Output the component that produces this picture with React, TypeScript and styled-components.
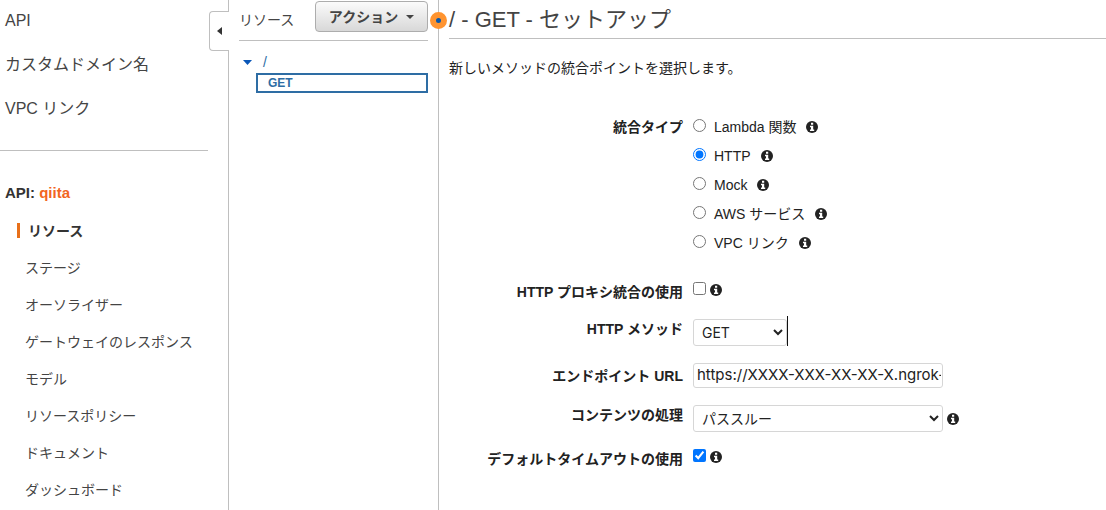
import React, { useState } from "react";
import styled, { createGlobalStyle, css } from "styled-components";

const sans = `"Liberation Sans", "Noto Sans CJK JP", sans-serif`;
const fieldFont = `Inter, "Noto Sans CJK JP", sans-serif`;
const line = "#bfbfbf";

const GlobalStyle = createGlobalStyle`
  * { box-sizing: border-box; }
  body { margin: 0; background: #fff; color: #222; font: 14px/20px ${sans}; }
  button, input, select { font-family: inherit; margin: 0; }
`;

const Page = styled.div`
  display: grid;
  grid-template-columns: 229px 210px minmax(0, 1fr);
  min-height: 100vh;
`;

const Sidebar = styled.aside`
  position: relative;
  padding: 9px 20px 0 0;
  border-right: 1px solid ${line};
  color: #444;
`;

const CollapseButton = styled.button`
  position: absolute;
  top: 11px;
  right: -1px;
  width: 20px;
  height: 40px;
  padding: 0;
  display: flex;
  align-items: center;
  justify-content: center;
  border: 1px solid ${line};
  border-right: 0;
  border-radius: 4px 0 0 4px;
  background: #fff;
`;

const MainNav = styled.nav`
  display: flex;
  flex-direction: column;
  gap: 20px;
  padding: 0 5px 29px;
  border-bottom: 1px solid ${line};
`;

const MainLink = styled.a`
  color: #444;
  font-size: 16px;
  line-height: 24px;
  text-decoration: none;
`;

const ApiName = styled.h2`
  margin: 32px 0 9px 5px;
  font-size: 15px;
  line-height: 20px;
  color: #333;

  span { color: #f26522; }
`;

const ApiNav = styled.nav`
  display: flex;
  flex-direction: column;
`;

const ApiLink = styled.a<{ $active?: boolean }>`
  display: flex;
  align-items: center;
  height: 37px;
  padding-left: 25px;
  color: #444;
  text-decoration: none;
  white-space: nowrap;

  ${({ $active }) => $active && css`
    padding-left: 17px;
    color: #333;
    font-weight: bold;

    &::before {
      content: "";
      width: 3px;
      height: 15px;
      margin-right: 8px;
      background: #e8701a;
    }
  `}
`;

const Resources = styled.section`
  position: relative;
  padding: 0 10px;
  border-right: 1px solid ${line};
`;

const ResourcesHeader = styled.header`
  display: flex;
  align-items: flex-start;
  justify-content: space-between;
  height: 41px;
  padding-top: 1px;
  border-bottom: 1px solid ${line};
`;

const ResourcesTitle = styled.h2`
  margin: 9px 0 0;
  color: #444;
  font-size: 14px;
  font-weight: normal;
  line-height: 20px;
`;

const ActionButton = styled.button`
  display: flex;
  align-items: center;
  justify-content: center;
  gap: 8px;
  width: 113px;
  height: 31px;
  padding: 0 0 2px;
  border: 1px solid #adadad;
  border-radius: 4px;
  background: linear-gradient(#fbfbfb, #d8d8d8);
  color: #444;
  font-size: 14px;
  font-weight: bold;

  svg { margin-top: 2px; }
`;

const SplitHandle = styled.span`
  position: absolute;
  top: 12px;
  right: -9px;
  width: 17px;
  height: 17px;
  border: 6px solid #ff9430;
  border-radius: 50%;
  background: #0a57a8;
`;

const Tree = styled.ul`
  margin: 10px 0 0;
  padding: 0;
  list-style: none;
  color: #2e6da4;
`;

const TreeRoot = styled.li`
  display: flex;
  align-items: center;
  gap: 11px;
  height: 22px;
  padding-left: 4px;
`;

const TreeMethod = styled.li`
  margin-left: 17px;
  height: 20px;
  padding-left: 10px;
  border: 2px solid #2e6da4;
  font-size: 12px;
  font-weight: bold;
  line-height: 16px;
`;

const Setup = styled.main`
  padding-left: 10px;
`;

const SetupTitle = styled.h1`
  margin: 0;
  padding: 6px 0 4px;
  border-bottom: 1px solid ${line};
  color: #444;
  font-size: 22px;
  font-weight: normal;
  line-height: 28px;
`;

const Intro = styled.p`
  margin: 19px 0 0;
`;

const Form = styled.form`
  display: flex;
  flex-direction: column;
  gap: 17px;
  margin-top: 34px;
`;

const fieldGrid = css`
  display: grid;
  grid-template-columns: 234px minmax(0, 1fr);
  column-gap: 10px;
`;

const Field = styled.div<{ $center?: boolean }>`
  ${fieldGrid}
  align-items: ${({ $center }) => ($center ? "center" : "start")};
`;

const FieldLabel = styled.label`
  font-weight: bold;
  text-align: right;
`;

const RadioField = styled.fieldset`
  ${fieldGrid}
  margin: 0 0 8px;
  padding: 0;
  border: 0;
`;

const GroupLabel = styled.span`
  padding-top: 5px;
  font-weight: bold;
  text-align: right;
`;

const RadioRow = styled.div`
  display: flex;
  align-items: center;
  height: 29px;

  input { width: 13px; height: 13px; margin-bottom: 2px; }
  label { margin: 0 10px 0 8px; }
`;

const Control = styled.div`
  display: flex;
  align-items: center;
  gap: 4px;
`;

const Checkbox = styled.input`
  width: 13px;
  height: 13px;
  margin-bottom: 2px;
`;

const boxStyle = css`
  border: 1px solid #d6d6d6;
  border-radius: 3px;
  background: #fff;
  color: #222;
`;

const Select = styled.select<{ $wide?: boolean }>`
  ${boxStyle}
  width: ${({ $wide }) => ($wide ? "250px" : "94px")};
  height: 27px;
  padding: 0 0 0 4px;
  && { font: 14px/20px ${fieldFont}; }
`;

const UrlInput = styled.input`
  ${boxStyle}
  width: 250px;
  height: 25px;
  padding: 0 1px 2px 3px;
  && { font: 15px/20px ${fieldFont}; }
`;

const MethodControl = styled.div`
  position: relative;
  width: 94px;
  height: 27px;

  &::after {
    content: "";
    position: absolute;
    top: -3px;
    right: -1px;
    width: 1px;
    height: 30px;
    background: #111;
  }
`;

const InfoSvg = styled.svg`
  display: block;
  flex: none;
  width: 12px;
  height: 12px;
`;

function Info() {
  return (
    <InfoSvg viewBox="0 0 12 12" role="img" aria-label="情報">
      <circle cx="6" cy="6" r="6" fill="#222" />
      <path d="M5 1.800h2.200v1.900H5zM4 4.700h3.200v3.700H8.200V10H4V8.400h1V6.200H4z" fill="#fff" />
    </InfoSvg>
  );
}

const mainLinks = ["API", "カスタムドメイン名", "VPC リンク"];
const apiLinks = [
  "リソース",
  "ステージ",
  "オーソライザー",
  "ゲートウェイのレスポンス",
  "モデル",
  "リソースポリシー",
  "ドキュメント",
  "ダッシュボード",
];
const integrationTypes = ["Lambda 関数", "HTTP", "Mock", "AWS サービス", "VPC リンク"];

export default function App() {
  const [type, setType] = useState("HTTP");
  return (
    <>
      <GlobalStyle />
      <Page>
        <Sidebar>
          <MainNav>
            {mainLinks.map((t) => <MainLink href="#" key={t}>{t}</MainLink>)}
          </MainNav>
          <ApiName>API: <span>qiita</span></ApiName>
          <ApiNav>
            {apiLinks.map((t, i) => <ApiLink href="#" key={t} $active={i === 0}>{t}</ApiLink>)}
          </ApiNav>
          <CollapseButton type="button" aria-label="メニューを閉じる">
            <svg width="5" height="8" viewBox="0 0 5 8"><path d="M5 0v8L0 4z" fill="#333" /></svg>
          </CollapseButton>
        </Sidebar>

        <Resources>
          <ResourcesHeader>
            <ResourcesTitle>リソース</ResourcesTitle>
            <ActionButton type="button">
              アクション
              <svg width="8" height="4" viewBox="0 0 8 4"><path d="M0 0h8L4 4z" fill="#444" /></svg>
            </ActionButton>
          </ResourcesHeader>
          <Tree>
            <TreeRoot>
              <svg width="9" height="5" viewBox="0 0 9 5"><path d="M0 0h9L4.500 5z" fill="#0a57b8" /></svg>
              /
            </TreeRoot>
            <TreeMethod>GET</TreeMethod>
          </Tree>
          <SplitHandle />
        </Resources>

        <Setup>
          <SetupTitle>/ - GET - セットアップ</SetupTitle>
          <Intro>新しいメソッドの統合ポイントを選択します。</Intro>
          <Form>
            <RadioField aria-labelledby="type-label">
              <GroupLabel id="type-label">統合タイプ</GroupLabel>
              <div>
                {integrationTypes.map((t, i) => (
                  <RadioRow key={t}>
                    <input
                      type="radio"
                      name="type"
                      id={`type-${i}`}
                      checked={type === t}
                      onChange={() => setType(t)}
                    />
                    <label htmlFor={`type-${i}`}>{t}</label>
                    <Info />
                  </RadioRow>
                ))}
              </div>
            </RadioField>
            <Field>
              <FieldLabel htmlFor="proxy">HTTP プロキシ統合の使用</FieldLabel>
              <Control><Checkbox type="checkbox" id="proxy" /><Info /></Control>
            </Field>
            <Field>
              <FieldLabel htmlFor="method">HTTP メソッド</FieldLabel>
              <MethodControl>
                <Select id="method"><option>GET</option></Select>
              </MethodControl>
            </Field>
            <Field $center>
              <FieldLabel htmlFor="url">エンドポイント URL</FieldLabel>
              <UrlInput id="url" type="text" defaultValue="https://XXXX-XXX-XX-XX-X.ngrok-" />
            </Field>
            <Field>
              <FieldLabel htmlFor="content">コンテンツの処理</FieldLabel>
              <Control>
                <Select id="content" $wide><option>パススルー</option></Select>
                <Info />
              </Control>
            </Field>
            <Field>
              <FieldLabel htmlFor="timeout">デフォルトタイムアウトの使用</FieldLabel>
              <Control><Checkbox type="checkbox" id="timeout" defaultChecked /><Info /></Control>
            </Field>
          </Form>
        </Setup>
      </Page>
    </>
  );
}
